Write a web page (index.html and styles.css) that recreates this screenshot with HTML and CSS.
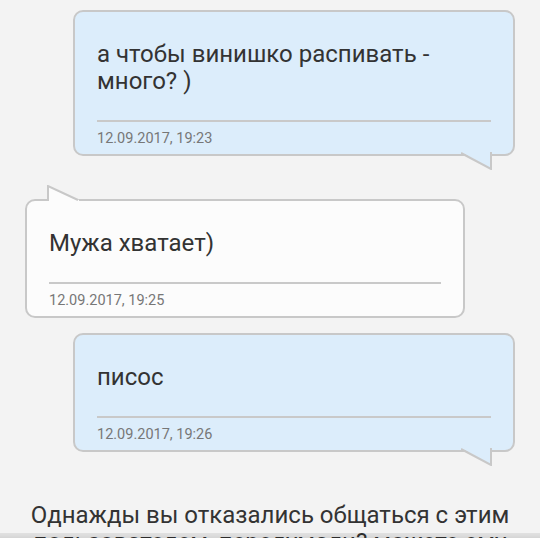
FILE: index.html
```html
<!DOCTYPE html>
<html lang="ru">
<head>
  <meta charset="UTF-8" />
  <meta name="viewport" content="width=device-width, initial-scale=1.0"/>
  <title>Диалог</title>
  <link rel="stylesheet" href="styles.css">
</head>
<body>
  <div class="chat">
    <div class="msg out">
      <div class="msg-text">а чтобы винишко распивать - много? )</div>
      <div class="msg-time">12.09.2017, 19:23</div>
      <svg class="tail tail-out" width="32" height="18" viewBox="0 0 32 18">
        <path d="M0 0 L31 0 L31 17 Z" fill="#dcedfb"/>
        <path d="M0 1 L30 17 L30 0" fill="none" stroke="#c8c8c8" stroke-width="2"/>
      </svg>
    </div>

    <div class="msg in">
      <svg class="tail tail-in" width="32" height="16" viewBox="0 0 32 16">
        <path d="M1 1 L32 15 L32 16 L1 16 Z" fill="#fcfcfc"/>
        <path d="M1 16 L1 1 L31 15" fill="none" stroke="#c8c8c8" stroke-width="2"/>
      </svg>
      <div class="msg-text">Мужа хватает)</div>
      <div class="msg-time">12.09.2017, 19:25</div>
    </div>

    <div class="msg out">
      <div class="msg-text">писос</div>
      <div class="msg-time">12.09.2017, 19:26</div>
      <svg class="tail tail-out" width="32" height="18" viewBox="0 0 32 18">
        <path d="M0 0 L31 0 L31 17 Z" fill="#dcedfb"/>
        <path d="M0 1 L30 17 L30 0" fill="none" stroke="#c8c8c8" stroke-width="2"/>
      </svg>
    </div>

    <p class="notice">Однажды вы отказались общаться с этим пользователем, передумали? можете ему написать.</p>
  </div>

  <div class="bottom-shade"></div>
</body>
</html>
```

FILE: styles.css
```css
* {
  margin: 0;
  padding: 0;
  box-sizing: border-box;
}

body {
  background: #f3f3f3;
  font-family: Roboto, 'Noto Sans', sans-serif;
  color: #333;
  overflow: hidden;
  height: 538px;
}

.chat {
  display: flex;
  flex-direction: column;
  padding: 10px 25px 0;
}

.msg {
  position: relative;
  width: 442px;
  padding: 29px 22px 6px 22px;
  border: 2px solid #c8c8c8;
  border-radius: 10px;
}

.msg.out {
  align-self: flex-end;
  background: #dcedfb;
}

.msg.in {
  align-self: flex-start;
  width: 440px;
  background: #fcfcfc;
  margin-top: 43px;
}

.msg.in + .msg.out {
  margin-top: 15px;
}

.msg-text {
  font-size: 24px;
  line-height: 27px;
  padding-bottom: 25px;
  border-bottom: 2px solid #c9c9c9;
}

.msg-time {
  margin-top: 8px;
  font-size: 14.5px;
  line-height: 18px;
  color: #777;
}

.tail {
  position: absolute;
  display: block;
}

.tail-out {
  top: 100%;
  right: 20px;
  margin-top: -2px;
}

.tail-in {
  bottom: 100%;
  left: 20px;
}

.notice {
  margin-top: 50px;
  text-align: center;
  font-size: 24px;
  line-height: 27px;
  color: #333;
}

.bottom-shade {
  position: fixed;
  left: 0;
  right: 0;
  bottom: 0;
  height: 5px;
  background: linear-gradient(to bottom, rgba(0,0,0,0.07), rgba(0,0,0,0.12));
}
```
